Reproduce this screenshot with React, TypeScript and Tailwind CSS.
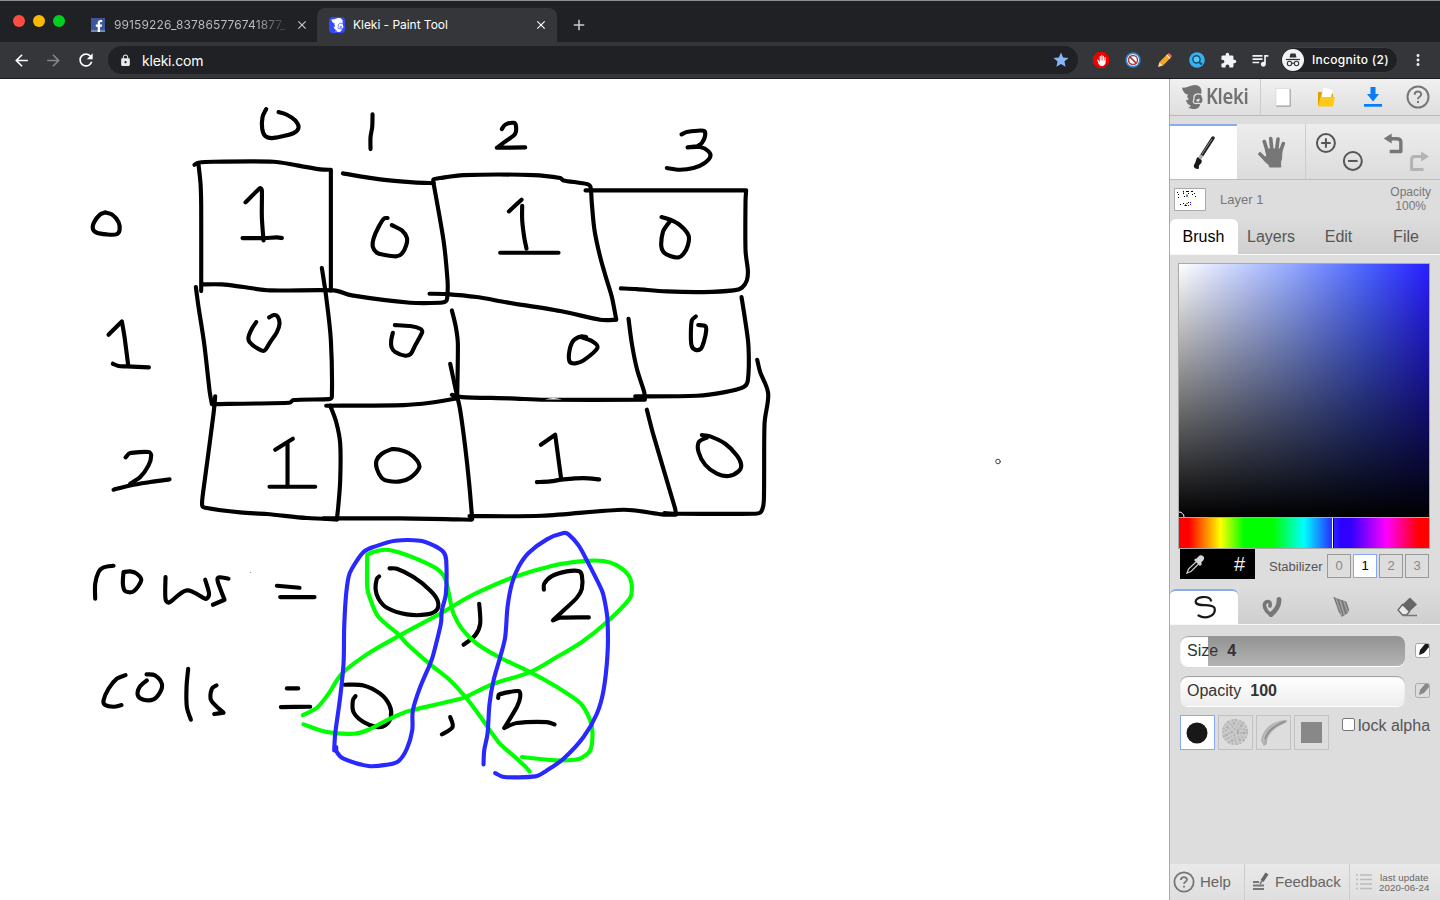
import type { ReactNode } from "react";
import { FaFacebookF } from "react-icons/fa";
import {
  MdArrowBack,
  MdArrowForward,
  MdRefresh,
  MdLock,
  MdStar,
  MdExtension,
  MdQueueMusic,
  MdMoreVert,
  MdClose,
  MdAdd,
  MdBackHand,
} from "react-icons/md";

/* Smooth curve through "x,y" points; "|" marks a sharp corner. */
function strokePath(source: string): string {
  const runs = source.split("|").map((run) =>
    run.trim().split(/\s+/).map((p) => p.split(",").map(Number)),
  );
  let d = "";
  let last: number[] | null = null;
  for (const run of runs) {
    const pts = last ? [last, ...run] : run;
    if (!last) d += `M${pts[0][0]} ${pts[0][1]}`;
    for (let i = 0; i < pts.length - 1; i++) {
      const p0 = pts[Math.max(i - 1, 0)];
      const p1 = pts[i];
      const p2 = pts[i + 1];
      const p3 = pts[Math.min(i + 2, pts.length - 1)];
      const span = Math.hypot(p2[0] - p1[0], p2[1] - p1[1]);
      const limit = (ax: number, ay: number) => {
        const len = Math.hypot(ax, ay) || 1;
        const k = Math.min(1, span / 3 / len);
        return [ax * k, ay * k];
      };
      const a = limit((p2[0] - p0[0]) / 6, (p2[1] - p0[1]) / 6);
      const b = limit((p3[0] - p1[0]) / 6, (p3[1] - p1[1]) / 6);
      d += `C${p1[0] + a[0]} ${p1[1] + a[1]} ${p2[0] - b[0]} ${p2[1] - b[1]} ${p2[0]} ${p2[1]}`;
    }
    last = pts[pts.length - 1];
  }
  return d;
}

type Group = { x: number; y: number; color: string; strokes: string[] };

const drawing: Group[] = [
  {
    x: 80, y: 90, color: "#000",
    strokes: [
      "558,56 547,80 546,115 555,137 575,143 605,138 640,128 655,112 645,90 620,73 595,65",
      "877,72 876,110 871,140 871,176",
      "343,223 355,217 400,214 580,214 650,225 720,237 752,238 | 752,600",
      "355,223 361,280 363,350 363,602",
      "365,582 425,582 490,590 570,600 760,600 815,615 990,637 1080,637 1098,632 1102,610 1102,570 1090,450 1060,278",
      "788,249 900,267 1000,276 1060,278",
      "496,336 530,302 540,293 545,300 545,380 550,450",
      "487,443 550,443 590,441 605,443",
      "922,383 912,384 895,410 880,445 878,470 890,487 910,493 948,498 965,490 978,465 980,442 965,420 935,404",
      "75,366 60,372 42,395 38,415 50,427 80,432 108,432 118,420 115,395 95,372 75,366",
    ],
  },
  {
    x: 420, y: 90, color: "#000",
    strokes: [
      "245,116 255,103 280,97 287,105 285,130 260,150 230,172 | 315,171",
      "784,132 800,125 850,121 855,135 845,158 830,168 | 802,171 | 840,170 865,183 870,200 850,220 820,233 780,238 740,233",
      "40,278 | 40,267 60,263 130,254 340,254 420,263 430,270 500,281 511,290 515,340 523,420 540,500 560,570 575,620 588,687",
      "496,300 978,300 | 976,330 976,480 983,540 980,570 965,592 940,600 850,605 740,603 650,596 602,594",
      "266,363 304,328",
      "306,346 306,390 312,440 319,475",
      "240,487 415,487",
      "724,380 750,388 780,405 805,435 803,465 790,490 775,501 750,497 730,485 723,465 728,425 740,405 750,392",
    ],
  },
  {
    x: 80, y: 280, color: "#000",
    strokes: [
      "725,-37 738,50 752,180 755,350 748,356 640,359 628,367 395,371 | 388,330 372,190 355,80 347,20",
      "85,163 100,148 125,123 | 133,170 144,255",
      "98,250 115,257 140,258 206,261",
      "528,125 515,145 505,170 508,185 530,203 552,211 570,185 590,155 598,130 592,108 580,104 567,111",
      "938,157 933,180 934,200 945,215 975,226 992,220 1005,195 1026,155 1020,145 990,137 944,134",
      "738,376 970,374 1050,367 1130,354",
      "405,348 400,400 383,530 367,650 366,675 375,682 480,696 560,701 680,713 770,717",
      "750,376 768,425 780,490 780,600 774,680 770,717",
      "730,714 960,714 1130,717 1174,718",
      "136,531 150,518 205,515 213,525 205,555 180,590 150,610",
      "100,628 150,615 210,605 268,597",
      "585,508 638,475",
      "622,488 622,618",
      "568,619 705,619",
      "935,506 905,520 889,540 890,565 905,593 925,602 960,603 990,592 1017,562 1010,540 985,518 955,507 935,506",
    ],
  },
  {
    x: 420, y: 280, color: "#000",
    strokes: [
      "28,40 80,41 170,50 260,66 420,92 540,118 588,118",
      "95,90 107,140 113,190 111,350",
      "90,250 107,330 120,390 135,500 147,610 156,716",
      "95,343 125,350 270,354 375,358 674,358 | 672,335 650,265 635,190 625,115",
      "645,348 830,346 910,336 970,320 983,300 985,200 975,120 964,50",
      "498,170 482,168 460,180 448,210 448,243 465,249 490,240 532,202 515,182 482,170",
      "827,108 815,120 812,160 814,195 825,208 842,205 852,180 858,150 855,137 834,134",
      "362,493 405,463 | 423,597",
      "350,605 390,603 430,597 490,593 537,597",
      "148,707 365,706 610,688 725,702 767,703 | 765,685 700,465 680,388",
      "733,698 770,700 1000,700 1022,695 1031,660 1033,430 1044,340 1020,275 1011,238",
      "845,464 870,468 915,490 950,525 963,553 955,573 925,587 890,580 855,553 835,515 836,485 860,472",
    ],
  },
  {
    x: 80, y: 520, color: "#000",
    strokes: [
      "45,235 45,190 55,155 70,141 100,136",
      "130,155 128,190 135,212 160,213 183,180 170,160 150,153 130,155",
      "256,170 255,215 257,240 268,246 320,210 375,235 385,228 386,215 375,178",
      "445,175 415,171 413,185 433,238 | 398,253",
      "590,196 658,202",
      "600,230 703,230",
      "136,464 110,475 85,505 70,540 75,554 100,559 124,554",
      "199,462 225,465 245,490 240,515 220,537 190,538 173,525 178,500 200,480",
      "324,445 319,500 320,560 332,598",
      "409,495 395,505 393,540 430,577 | 402,581",
      "620,504 654,504",
      "602,560 690,559",
      "928,144 950,145 1000,170 1050,210 1072,240 1070,268 1040,282 980,282 920,262 895,235 886,205 890,175 897,168",
      "793,493 850,495 900,520 928,555 932,590 915,615 890,620 850,605 820,575 818,540 826,527",
    ],
  },
  {
    x: 400, y: 520, color: "#000",
    strokes: [
      "237,250 240,310 225,345 190,373",
      "431,208 432,190 455,167 500,153 535,152 545,165 545,205 530,232 485,275 458,300 | 480,292 566,291",
      "150,590 157,620 125,642",
      "294,533 297,522 355,512 360,530 350,560 312,623 | 350,608 440,605 463,612",
    ],
  },
  {
    x: 400, y: 520, color: "#00ff00",
    strokes: [
      "-292,584 -250,562 -215,520 -175,460 -100,402 -5,347 120,280 150,262 225,220 335,172 460,135 550,122 610,122 650,135 685,165 695,200 688,235 620,305 545,365 470,410 390,455 280,490 195,530 140,545 40,568 15,575 -35,597 -95,628 -140,640 -220,635 -290,612",
      "388,753 375,738 350,715 295,665 245,595 200,535 150,480 90,432 20,370 -5,342 -65,290 -90,235 -99,200 -99,103 | -80,95 -45,88 0,97 60,120 110,145 130,165 140,190 150,240 160,280 185,325 230,370 300,412 390,455 470,500 540,548 570,600 577,640 570,690 545,712 525,718 465,720 365,710",
    ],
  },
  {
    x: 400, y: 520, color: "#2828ff",
    strokes: [
      "-198,690 -195,640 -180,530 -170,430 -168,320 -163,230 -155,170 -145,145 -110,95 -75,78 -15,61 60,61 100,75 130,95 138,120 137,220 125,270 122,310 100,400 90,430 60,500 38,570 36,630 20,685 -5,722 -40,733 -95,737 -170,715 -190,695 -192,680",
      "250,732 252,690 262,640 268,550 280,480 300,410 315,350 322,260 335,190 355,140 385,98 440,57 490,38 505,42 535,75 560,120 605,210 615,250 622,300 622,400 610,510 590,580 550,650 490,715 440,750 405,768 312,770 285,758",
    ],
  },
];

function Canvas() {
  return (
    <svg className="block h-[821px] w-[1169px] bg-white" viewBox="0 79 1169 821" fill="none" strokeLinecap="round" strokeLinejoin="round">
      {drawing.map((g, i) => (
        <g key={i} transform={`translate(${g.x + 0.2} ${g.y + 0.4}) scale(0.33333)`} stroke={g.color} strokeWidth="12.4">
          {g.strokes.map((s) => (
            <path key={s} d={strokePath(s)} />
          ))}
        </g>
      ))}
      <path d="M545 399.500Q553 396.500 562 399.500Z" fill="#fff" />
      <circle cx="250.5" cy="572.5" r="0.6" fill="#888" />
      <circle cx="998" cy="461.500" r="2.300" stroke="#444" strokeWidth="1" />
    </svg>
  );
}

function KlekiMark({ className, fill, hole }: { className: string; fill: string; hole: string }) {
  return (
    <svg className={className} viewBox="0 0 21 24">
      <path fill={fill} d="M0 2.500C5 3.500 8 0 13 0C17 0 20 3 19.500 7C18.700 9 19 10.500 20 12.500C21 15 20.500 18 18 18.500C18 21.500 16.500 24 12.500 24C9.500 24 7 23.500 6 22C8 22.500 9 21.500 8.500 20.500C5.500 19.500 4 17 4 14.500C5 15.500 6.500 15.500 6.500 13.500C5 13 5 11 6 9.500C3 9.500 0.500 6 0 2.500Z" />
      <path fill="none" stroke={hole} strokeWidth="1.200" d="M19 9.500C15 8 11.500 9.500 12 13C12.500 15 10.500 15.500 11.500 17.500C13 20 16 17.500 18.500 18.500" />
      <path fill={hole} d="M14.500 14.500L18 13.500L17 16.500L14.500 16.500Z" />
    </svg>
  );
}

function Chrome() {
  return (
    <header className="flex h-[79px] flex-col border-b border-[#1c1c1e] bg-[#202124] font-['Inter','Roboto',sans-serif] text-[12px] text-white">
      <div className="flex h-[42px] border-t border-[#8d9093]">
        <div className="flex w-[77px] gap-2 pl-[13px] pt-[14px]">
          <i className="size-3 rounded-full bg-[#ff4c42]" />
          <i className="size-3 rounded-full bg-[#fcb900]" />
          <i className="size-3 rounded-full bg-[#00ce20]" />
        </div>
        <div className="flex w-[240px] items-center pl-[14px] pt-[7px]">
          <span className="flex size-[14px] items-end justify-end border-b-2 border-[#7188bd] bg-[#3c579e]">
            <FaFacebookF size={12} className="-mb-0.5" />
          </span>
          <span className="ml-[9px] w-[176px] overflow-hidden whitespace-nowrap bg-gradient-to-r from-[#bdc1c6] from-80% to-transparent bg-clip-text text-[12px] tracking-[0.120px] text-transparent">
            99159226_837865776741877_
          </span>
          <MdClose size={14} color="#c4c7cb" className="ml-[5px]" />
        </div>
        <div className="mt-[7px] flex h-[34px] w-[240px] items-center rounded-t-lg bg-[#35363a] pl-3">
          <span className="flex size-4 items-center justify-center rounded bg-[#3549ff]">
            <KlekiMark className="h-[14px] w-[13px]" fill="#fff" hole="#3549ff" />
          </span>
          <span className="ml-2 w-[181px] text-[12px] tracking-[-0.040px]">Kleki - Paint Tool</span>
          <MdClose size={14} />
        </div>
        <MdAdd size={18} color="#c8cacd" className="ml-[13px] mt-[15px]" />
      </div>
      <div className="flex h-[36px] items-center bg-[#35363a]">
        <MdArrowBack size={19} className="ml-[12px]" />
        <MdArrowForward size={19} color="#85868a" className="ml-[13px]" />
        <MdRefresh size={20} className="ml-[13px]" />
        <div className="ml-3 flex h-7 w-[970px] items-center rounded-full bg-[#202124] pl-3 pr-2">
          <MdLock size={13} color="#e8eaed" className="-ml-px" />
          <span className="ml-[10px] flex-1 text-[14px] tracking-[-0.200px]">kleki.com</span>
          <MdStar size={18} color="#8ab4f8" />
        </div>
        <span className="ml-[15px] flex size-4 items-center justify-center bg-[#f00000] [clip-path:polygon(30%_0,70%_0,100%_30%,100%_70%,70%_100%,30%_100%,0_70%,0_30%)]">
          <MdBackHand size={11} />
        </span>
        <svg className="ml-4 size-4" viewBox="0 0 16 16">
          <circle cx="8" cy="8" r="7.700" fill="#3386d6" />
          <circle cx="8" cy="8" r="6" fill="#fff" />
          <circle cx="8" cy="8" r="4.500" fill="none" stroke="#a44" strokeWidth="1.500" />
          <path d="M4.500 4.500L11.500 11.500" stroke="#a33" strokeWidth="1.700" />
        </svg>
        <svg className="ml-4 size-4" viewBox="0 0 16 16">
          <path fill="#f8a91b" d="M2.500 10L10 2.500L13.500 6L6 13.500Z" />
          <path fill="#ff674f" d="M10 2.500L12 1L15 4L13.500 6Z" />
          <path fill="#fff" d="M9.300 3.200L10 2.500L13.500 6L12.800 6.700Z" />
          <path fill="#f9dfae" d="M2.500 10L1 15L6 13.500Z" />
        </svg>
        <svg className="ml-4 size-4" viewBox="0 0 16 16">
          <circle cx="8" cy="8" r="7.800" fill="#35b2ef" />
          <circle cx="7.500" cy="7.300" r="3.600" fill="#5bc7f5" stroke="#17506f" strokeWidth="1.500" />
          <path d="M10 10L12.800 12.600" stroke="#17506f" strokeWidth="2" />
        </svg>
        <MdExtension size={17} color="#f1f3f4" className="ml-[15px]" />
        <MdQueueMusic size={20} color="#f1f3f4" className="ml-[13px]" />
        <div className="ml-[10px] flex h-[26px] w-[118px] items-center rounded-full border border-[#3c3d41] bg-[#202124]">
          <svg className="ml-px size-[22px] shrink-0" viewBox="0 0 22 22">
            <circle cx="11" cy="11" r="11" fill="#f1f3f4" />
            <path fill="#303135" d="M7.500 8.500L8.500 4.500H13.500L14.500 8.500Z" />
            <path d="M4 10.500H18" stroke="#303135" strokeWidth="1.200" />
            <g fill="none" stroke="#303135" strokeWidth="1.100">
              <circle cx="7.500" cy="14.500" r="2.200" />
              <circle cx="14.500" cy="14.500" r="2.200" />
              <path d="M9.700 14.200H12.300" />
            </g>
          </svg>
          <span className="ml-2 whitespace-nowrap text-[12px] font-medium tracking-[0.300px]">Incognito (2)</span>
        </div>
        <MdMoreVert size={18} color="#e8eaed" className="ml-[11px]" />
      </div>
    </header>
  );
}

function Help({ className }: { className: string }) {
  return (
    <svg className={className} viewBox="0 0 24 24" fill="none" stroke="#777" strokeWidth="2">
      <circle cx="12" cy="12" r="10.500" />
      <path d="M8.700 9.700C8.700 5.500 15.300 5.700 15.200 9.500C15 12 12 11.500 12 14.200" />
      <path d="M12 16V18" />
    </svg>
  );
}

function TopBar() {
  return (
    <div className="flex h-[37px] items-center border-b border-[#b9b9b9] bg-gradient-to-b from-[#f0f0f0] to-[#dfdfdf] text-[#727272]">
      <div className="flex h-full w-[91px] items-center border-r border-[#ccc] pl-3">
        <KlekiMark className="h-6 w-[21px]" fill="#727272" hole="#e5e5e5" />
        <span className="ml-[3px] w-[43px] origin-left font-['Noto_Sans',sans-serif] text-[21px] font-semibold tracking-[-0.400px] [transform:scaleX(0.880)]">Kleki</span>
      </div>
      <svg className="ml-[14px] h-[19px] w-4" viewBox="0 0 16 19">
        <path fill="#999" d="M1.500 1H15.700V18.700H1.500Z" />
        <path fill="#fff" stroke="#ccc" strokeWidth="0.500" d="M1 0.500H14.700V17.500H1Z" />
      </svg>
      <svg className="ml-[26px] h-5 w-[18px]" viewBox="0 0 18 20">
        <path fill="#dba100" d="M1 5H5L7 7H16V19H1Z" />
        <path fill="#fff" stroke="#ddd" strokeWidth="0.400" d="M6 0L16 2.500L13 14L4 12Z" />
        <path fill="#ffca13" d="M3.500 10H18L16 19.500H1Z" />
      </svg>
      <svg className="ml-[29px] h-5 w-[18px]" viewBox="0 0 18 20" fill="#087bff">
        <path d="M6.500 0H11.500V7H15L9 14.500L3 7H6.500Z" />
        <path d="M0 17H18V19.700H0Z" />
      </svg>
      <Help className="ml-[24px] size-6" />
    </div>
  );
}

function HandIcon() {
  return (
    <svg className="h-8 w-7" viewBox="0 0 28 32" fill="#777" stroke="#777" strokeLinecap="round" strokeLinejoin="round">
      <path strokeWidth="3.600" d="M9.500 16L6.300 5.500M14 15L12.700 2.500M18.500 15L20 3M22 17L25.300 7.500M8 24L2 18" />
      <path strokeWidth="1" d="M7.700 13H24L23.700 21C23.500 24 22.500 25 22.500 28L22.800 31H11.500L11 28.500C8 27 6.500 25 5 22.500L8.500 20Z" />
    </svg>
  );
}

function ToolRow() {
  return (
    <div className="mt-2 flex h-[56px] border-b border-[#bcbcbc] bg-gradient-to-b from-[#ededed] to-[#dcdcdc]">
      <div className="flex w-[67px] items-center justify-center border-t-2 border-[#8aabf0] bg-white pl-[2px]">
        <svg className="h-9 w-[22px]" viewBox="0 0 22 36">
          <path d="M20 3L9 20" stroke="#222" strokeWidth="3.400" strokeLinecap="round" />
          <path d="M19 4L9 19" stroke="#999" strokeWidth="0.900" />
          <path d="M8.800 20L6.700 23.500" stroke="#aaa" strokeWidth="3.500" />
          <path fill="#181818" d="M4.500 22L8.500 25C9.500 28 7 29 6 30.500C5.500 32.500 6.500 34 5 34C1 34 0 31 1.500 29C3 27 2.500 25 4.500 22Z" />
        </svg>
      </div>
      <div className="flex w-[69px] items-center justify-center border-r border-[#ccc] pl-[2px]">
        <HandIcon />
      </div>
      <svg className="h-[55px] w-[135px]" viewBox="0 0 135 55" fill="none" stroke="#555" strokeWidth="2">
        <circle cx="20" cy="19" r="9" />
        <path d="M15.200 19H24.800M20 14.200V23.800" />
        <circle cx="47" cy="37" r="9" />
        <path d="M42.200 37H51.800" />
        <g stroke="#777" strokeWidth="3.400" strokeLinejoin="round">
          <path d="M84 14.700H91Q95.200 14.700 95.200 18V27.500H84" />
          <path fill="#777" stroke="none" d="M78 14.500L86 9.500V19.500Z" />
        </g>
        <g stroke="#b3b3b3" strokeWidth="3" strokeLinejoin="round">
          <path d="M116 32.500H109Q106 32.500 106 36V45.500H118" />
          <path fill="#b3b3b3" stroke="none" d="M123.500 32.500L115.500 27.500V37.500Z" />
        </g>
      </svg>
    </div>
  );
}

function LayerRow() {
  return (
    <div className="flex h-[39px] items-center pl-1 pr-[9px] text-[13px] text-[#777]">
      <svg className="h-[23px] w-8" viewBox="0 0 32 23">
        <path fill="#fff" stroke="#aaa" d="M0.500 0.500H31.500V22.500H0.500Z" />
        <path fill="none" stroke="#000" strokeWidth="1" d="M3 4.500H4M4 6.500H5M9 5.500H10M9.500 3V4.500M10 8.500H11M12 3.500H15M14 5.500H15M13 6.500V9M17 3.500H19M20 5.500H21M18 6.500H19M21 8.500H22M4 9.500H5M6 16.500H7M9 15.500H10M14 14.500H15M11 17.500H12" />
        <path fill="none" stroke="#00e000" strokeWidth="1" d="M10 17.500H11M11 16.500H12M12 15.500H14" />
        <path fill="none" stroke="#2222ff" strokeWidth="1" d="M12 17.500H13M14 17.500H15M16 16.500H17M16 14.500H17" />
      </svg>
      <span className="ml-[14px] flex-1">Layer 1</span>
      <span className="-mt-[2px] text-center text-[12px] leading-[14px]">
        Opacity
        <br />
        100%
      </span>
    </div>
  );
}

function MainTabs() {
  return (
    <div className="flex h-[36px] border-b border-[#f8f8f8] bg-gradient-to-b from-[#dcdcdc] to-[#cfcfcf] text-[16px] leading-[35px] text-[#555]">
      <span className="w-[68px] rounded-t-md bg-white pr-px text-center text-black">Brush</span>
      <span className="w-[67px] pr-px text-center">Layers</span>
      <span className="w-[67px] text-center">Edit</span>
      <span className="w-[68px] text-center">File</span>
    </div>
  );
}

function ColorPicker() {
  return (
    <div className="mx-2 mt-2 w-[252px] border border-[#aaa]">
      <div className="h-[253px] bg-[linear-gradient(to_top,#000,transparent),linear-gradient(to_right,#fff,#93a8ff_45%,#4a62ff_75%,#281eff)]">
        <svg className="block h-full w-full" viewBox="0 0 250 253" fill="none">
          <circle cx="0" cy="253" r="5" stroke="#fff" />
        </svg>
      </div>
      <div className="flex h-[31px] border-t border-[#aaa] bg-[linear-gradient(to_right,#f00_4%,#ff0_16.600%,#0f0_26%,#0f0_37.500%,#0ff_50%,#2828ff_61.500%,#2d00ff_65%,#3300ff_69%,#f0f_83%,#f00_96%)]">
        <span className="ml-[153px] w-[2px] border-l border-white bg-black" />
      </div>
    </div>
  );
}

function Stabilizer() {
  const box = "flex size-6 items-center justify-center border border-[#999] text-[#888]";
  return (
    <div className="flex h-[31px] pl-[10px] pr-[11px]">
      <div className="flex h-[30px] w-[75px] items-center bg-black pl-[6px] text-[#d8d8d8]">
        <svg className="size-5" viewBox="0 0 20 20">
          <path fill="#d8d8d8" d="M10 5L13 2C15 0 20 3 17.500 6L15 9L16 10L14 12L8 6L9.500 4.500Z" />
          <path fill="none" stroke="#c8c8c8" strokeWidth="1.300" d="M10 8L2.500 15L1 19L5 17.500L12.500 10" />
        </svg>
        <span className="ml-7 text-[20px] text-[#eee]">#</span>
      </div>
      <span className="ml-[14px] w-[58px] pt-[9px] text-[13px] leading-[17px] text-[#555]">Stabilizer</span>
      <div className="mt-[5px] flex gap-[2px] text-[13px]">
        <span className={box}>0</span>
        <span className="flex size-6 items-center justify-center border border-[#86a8f3] bg-white text-black">1</span>
        <span className={box}>2</span>
        <span className={box}>3</span>
      </div>
    </div>
  );
}

function BrushTabs() {
  return (
    <div className="mt-[9px] flex h-[36px] border-b border-[#f8f8f8] bg-gradient-to-b from-[#dcdcdc] to-[#cfcfcf]">
      <div className="flex w-[68px] items-center justify-center rounded-t-md border-t-2 border-[#8aabf0] bg-white pb-px pl-[2px]">
        <svg className="h-6 w-[22px]" viewBox="0 0 22 24" fill="none" stroke="#181818" strokeWidth="2.200" strokeLinecap="round">
          <path d="M17 5.500C15 0 1 1.500 1.700 7C2.500 12.500 18 8 20.500 13C22.500 20.500 12 25 4.500 20.500" />
        </svg>
      </div>
      <div className="flex w-[67px] items-center justify-center">
        <svg className="h-6 w-[22px] blur-[0.7px]" viewBox="0 0 22 24" fill="none" stroke="#777" strokeLinecap="round" strokeLinejoin="round">
          <path strokeWidth="3.600" d="M9 11C10 6.500 7 5.500 4.500 7.500C2 10 3.500 13 6 16.500L10 20" />
          <path strokeWidth="4.800" d="M10 19.500C14.500 16 18.500 10 18 4.500" />
        </svg>
      </div>
      <div className="flex w-[67px] items-center justify-center pl-[5px]">
        <svg className="h-6 w-[19px] blur-[0.3px]" viewBox="0 0 19 24" fill="none">
          <path fill="#8c8c8c" d="M1.500 2L14 6.500L17 14L16 18L10 22L6.500 17Z" />
          <path stroke="#6f6f6f" strokeWidth="1" d="M2 2L9 18M6 4L11 21M10 5L14 19M14 7L16.500 16" />
          <path stroke="#aaa" strokeWidth="0.900" d="M4 4L10 20M8 6L12.500 20M12 7L16 17" />
        </svg>
      </div>
      <div className="flex w-[68px] items-center justify-center pl-px pt-px">
        <svg className="h-5 w-5" viewBox="0 0 20 20">
          <path fill="#666" d="M13 0.500L20 7.500L12.500 14.500L5.500 7.500Z" />
          <path fill="#e9e9e9" stroke="#666" strokeWidth="1.300" d="M5.500 7.500L1 13L5.500 18H9.500L12.500 14.500Z" />
          <path d="M6 18.500H20" stroke="#777" strokeWidth="1.500" />
        </svg>
      </div>
    </div>
  );
}

function PressureIcon({ active }: { active: boolean }) {
  return (
    <svg className="ml-[10px] size-[15px]" viewBox="0 0 15 15">
      <rect x="0.500" y="0.500" width="14" height="14" rx="2" fill={active ? "#fff" : "#ddd"} stroke={active ? "#86a8f3" : "#aaa"} />
      <path fill={active ? "#181818" : "#888"} d="M4 12L5 7L10 1H13.500L14 4L9 10Z" />
    </svg>
  );
}

function Slider({ track, label, value, active }: { track: string; label: string; value: string; active: boolean }) {
  return (
    <div className="flex h-[31px] items-center pl-[10px]">
      <div className={"flex h-[30px] w-[225px] items-center rounded-lg pl-[7px] text-[16px] text-[#333] shadow-[0_1px_0_#fff,inset_0_1px_1px_#999] " + track}>
        {label}
        <b className="ml-[9px] text-[16px]">{value}</b>
      </div>
      <PressureIcon active={active} />
    </div>
  );
}

function Tip({ active = false, children }: { active?: boolean; children: ReactNode }) {
  return (
    <span className={active ? "flex size-[35px] items-center justify-center border border-[#86a8f3] bg-white" : "flex size-[35px] items-center justify-center border border-[#c2c2c2]"}>
      {children}
    </span>
  );
}

function BrushTips() {
  return (
    <div className="mt-[9px] flex pl-[10px]">
      <div className="flex gap-[3px]">
        <Tip active>
          <svg className="-ml-px size-[22px]" viewBox="0 0 22 22"><circle cx="11" cy="11" r="10.500" fill="#181818" /></svg>
        </Tip>
        <Tip>
          <svg className="-ml-px -mt-px size-7 blur-[0.4px]" viewBox="0 0 28 28">
            <circle cx="14" cy="14" r="13" fill="#c9c9c9" />
            <g fill="none" strokeWidth="2.200" strokeDasharray="2 3 1 2">
              <circle cx="14" cy="14" r="12" stroke="#b2b2b2" />
              <circle cx="14" cy="14" r="9" stroke="#aaa" />
              <circle cx="14" cy="14" r="6" stroke="#b7b7b7" />
              <circle cx="14" cy="14" r="3" stroke="#aaa" />
            </g>
          </svg>
        </Tip>
        <Tip>
          <svg className="size-7 blur-[0.4px]" viewBox="0 0 28 28">
            <path fill="#b0b0b0" d="M27 1C16 1 3 7 1 22L4 27L7 25C6 16 14 9 27 3Z" />
            <path fill="none" stroke="#8f8f8f" strokeWidth="1.800" d="M25 2.500C15 6 8 11 5 20" />
            <path fill="none" stroke="#c4c4c4" d="M19 3C10 6 4 14 3 23" />
          </svg>
        </Tip>
        <Tip>
          <span className="size-[21px] bg-[#888]" />
        </Tip>
      </div>
      <label className="ml-[13px] flex h-[21px] items-center text-[16px] text-[#555]">
        <span className="mb-[3px] size-[13px] rounded-[2px] border border-[#767676] bg-white" />
        <span className="ml-[3px] whitespace-nowrap">lock alpha</span>
      </label>
    </div>
  );
}

function Footer() {
  return (
    <div className="mt-auto flex h-[36px] bg-gradient-to-b from-[#e9e9e9] to-[#dfdfdf] text-[15px] text-[#666]">
      <div className="flex w-[75px] items-center border-r border-[#ccc] pl-[3px]">
        <Help className="size-[22px]" />
        <span className="ml-[5px]">Help</span>
      </div>
      <div className="flex w-[105px] items-center border-r border-[#ccc] pl-[7px]">
        <svg className="-mt-[2px] h-5 w-[18px]" viewBox="0 0 18 20" stroke="#777" fill="none">
          <path strokeWidth="2" d="M1 11H7M1 14.500H12M1 18H12" />
          <path stroke="#666" strokeWidth="3.500" d="M10 10L15 2.500" />
          <path strokeWidth="1.500" d="M8 13L10 10" />
        </svg>
        <span className="ml-[5px]">Feedback</span>
      </div>
      <div className="flex w-[90px] items-center pl-[6px]">
        <svg className="h-4 w-4" viewBox="0 0 16 16" stroke="#bbb" strokeWidth="1.300">
          <path d="M0 1H2M4 1H16M0 5.500H2M4 5.500H16M0 10H2M4 10H16M0 14.500H2M4 14.500H16" />
        </svg>
        <span className="ml-[7px] mt-px whitespace-nowrap text-center text-[9.700px] leading-[10px] tracking-[0.100px]">
          last update
          <br />
          2020-06-24
        </span>
      </div>
    </div>
  );
}

export default function App() {
  return (
    <div className="flex h-[900px] w-[1440px] flex-col overflow-hidden bg-white">
      <Chrome />
      <main className="flex h-[821px]">
        <Canvas />
        <aside className="flex w-[271px] flex-col border-l border-[#aaa] bg-[#ddd] font-['Liberation_Sans',Arial,sans-serif]">
          <TopBar />
          <ToolRow />
          <LayerRow />
          <MainTabs />
          <ColorPicker />
          <Stabilizer />
          <BrushTabs />
          <div className="mt-[10px] flex flex-col gap-[9px]">
            <Slider label="Size" value="4" active track="bg-[linear-gradient(to_right,#fff_28px,transparent_28px),linear-gradient(to_bottom,#929292,#b4b4b4)]" />
            <Slider label="Opacity" value="100" active={false} track="bg-gradient-to-b from-white to-[#eee]" />
          </div>
          <BrushTips />
          <Footer />
        </aside>
      </main>
    </div>
  );
}
